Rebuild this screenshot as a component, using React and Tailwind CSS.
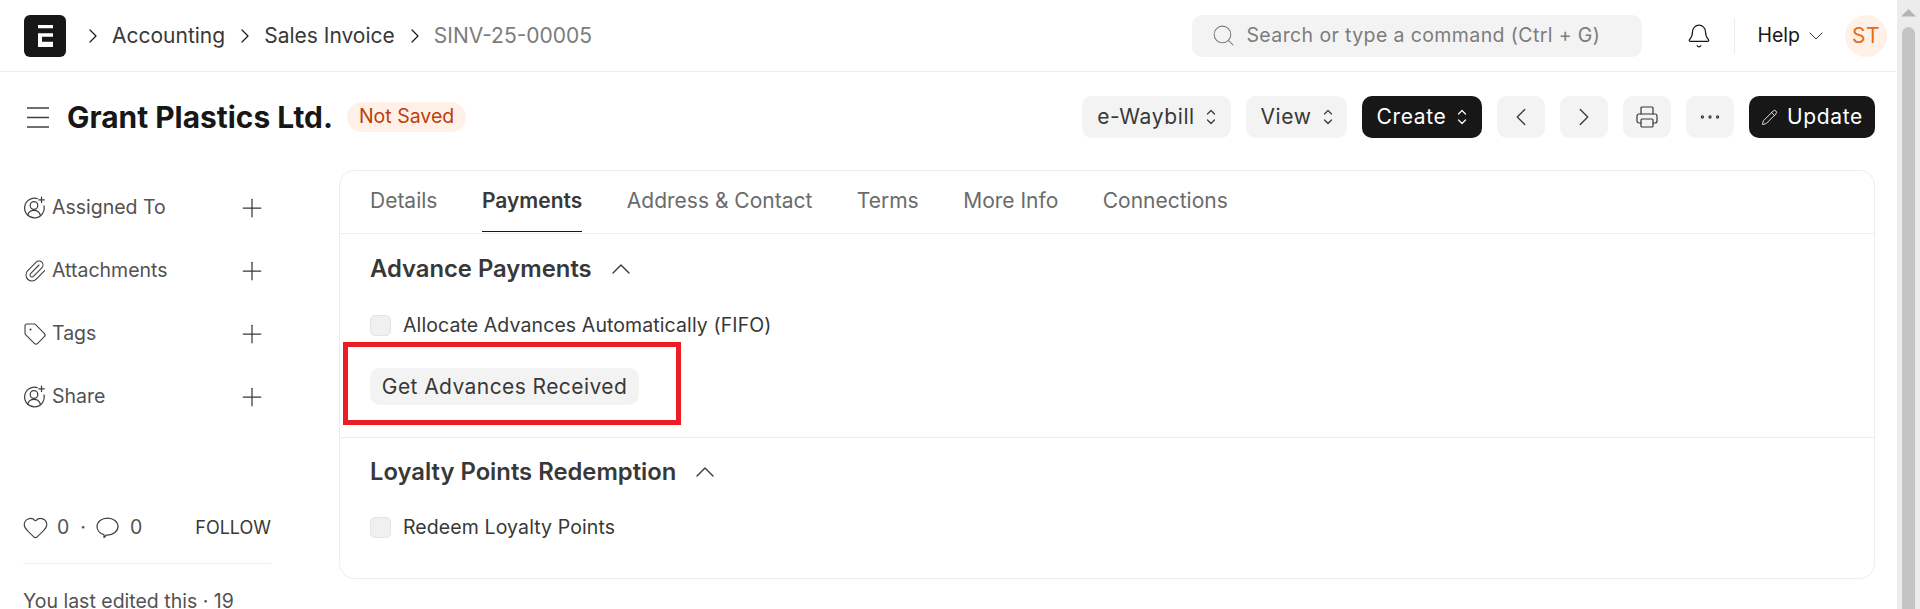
import { Search, Bell, ChevronDown, ChevronUp, ChevronLeft, ChevronRight, Printer, Ellipsis, Pencil, Plus, Paperclip, Tag, Heart } from 'lucide-react';

const Logo = () => (
  <div className="w-[42px] h-[42px] rounded-md bg-[#171717] flex items-center justify-center shrink-0">
    <svg width="15" height="22" viewBox="0 0 15 22" fill="#fff">
      <path d="M0 0h15v3.3H0zM0 8.3h15v3.4H4v5h11V22H0z" />
    </svg>
  </div>
);

const UserPlus = () => (
  <svg width="23" height="23" viewBox="0 0 23 23" fill="none" stroke="#404040" strokeWidth="1.25" strokeLinecap="round">
    <path d="M14.2 2.6A9.8 9.8 0 1 0 21 10" />
    <circle cx="11" cy="9.5" r="3.8" />
    <path d="M4.6 19.2c1-3.2 3.4-4.9 6.4-4.9s5.4 1.7 6.4 4.9" />
    <path d="M18.5 1v5.6M15.7 3.8h5.6" />
  </svg>
);

const Comment = () => (
  <svg width="23" height="22" viewBox="0 0 23 22" fill="none" stroke="#404040" strokeWidth="1.25" strokeLinejoin="round">
    <path d="M8 17.6C3.9 16.7 1 13.4 1 9.5 1 4.8 5.7 1 11.5 1S22 4.8 22 9.5 17.3 18 11.5 18h-.9L8 20.5z" />
  </svg>
);

const Hamburger = () => (
  <svg width="22" height="21" viewBox="0 0 22 21" fill="none" stroke="#404040" strokeWidth="1.5">
    <path d="M0 1h22M0 10.5h22M0 20h22" />
  </svg>
);

const UpDown = () => (
  <svg width="10" height="16" viewBox="0 0 10 16" fill="none" stroke="currentColor" strokeWidth="1.2" strokeLinecap="round" strokeLinejoin="round">
    <path d="M1.5 5 5 1.5 8.5 5M1.5 11 5 14.5 8.5 11" />
  </svg>
);

const Crumb = ({ children, muted }) => (
  <>
    <ChevronRight size={24} strokeWidth={1.2} className="text-[#171717] ml-[8px] mr-[7px]" />
    <span className={muted ? 'text-[#7c7c7c]' : 'text-[#383838]'}>{children}</span>
  </>
);

const ToolBtn = ({ children, className = '' }) => (
  <button className={`h-[42px] rounded-[10px] bg-[#f3f3f3] flex items-center justify-center text-[#383838] text-[21px] tracking-[0.03em] ${className}`}>
    {children}
  </button>
);

const SideRow = ({ icon, label }) => (
  <div className="h-[63px] flex items-center text-[19.5px] text-[#525252]">
    <div className="w-[29px] flex items-center">{icon}</div>
    <span className="flex-1">{label}</span>
    <Plus size={30} strokeWidth={1} className="text-[#383838] mr-[4px]" />
  </div>
);

const Check = ({ label }) => (
  <div className="flex items-center gap-[12px] text-[19.5px] tracking-[0.1px] text-[#383838]">
    <span className="w-[21px] h-[21px] rounded-[5px] bg-[#f0f0f0] border border-[#e4e4e4]" />
    <span>{label}</span>
  </div>
);

const Heading = ({ children }) => (
  <div className="flex items-center gap-[13px] text-[23.8px] font-semibold text-[#383838]">
    <span>{children}</span>
    <ChevronUp size={32} strokeWidth={1} className="text-[#383838]" />
  </div>
);

export default function App() {
  return (
    <div className='h-[609px] w-full overflow-hidden flex bg-white font-["Inter",sans-serif]'>
      <div className="flex-1 min-w-0 flex flex-col">
        <header className="h-[72px] shrink-0 border-b border-[#ededed] pl-[24px] pr-[10px] flex items-center">
          <Logo />
          <div className="ml-[7px] flex items-center text-[21px]">
            <Crumb>Accounting</Crumb>
            <Crumb>Sales Invoice</Crumb>
            <Crumb muted>SINV-25-00005</Crumb>
          </div>
          <div className="ml-auto w-[450px] h-[42px] rounded-[10px] bg-[#f3f3f3] flex items-center px-[19px] gap-[10px] text-[19.5px] tracking-[0.02em] text-[#7c7c7c]">
            <Search size={25} strokeWidth={1} />
            <span>Search or type a command (Ctrl + G)</span>
          </div>
          <Bell size={26} strokeWidth={1.1} className="ml-[44px] text-[#171717]" />
          <div className="ml-[22px] h-[36px] w-px bg-[#ededed]" />
          <span className="ml-[22px] text-[19.5px] text-[#171717]">Help</span>
          <ChevronDown size={24} strokeWidth={1} className="ml-[4px] text-[#383838]" />
          <div className="ml-[17px] w-[42px] h-[42px] rounded-full bg-[#fff1e7] text-[#e86c13] text-[21px] tracking-[0.02em] flex items-center justify-center">ST</div>
        </header>

        <div className="h-[98px] shrink-0 pl-[27px] pr-[22px] pb-[8px] flex items-center">
          <Hamburger />
          <h1 className="ml-[18px] text-[29.9px] font-bold text-[#171717]">Grant Plastics Ltd.</h1>
          <span className="ml-[14px] h-[30px] px-[12px] rounded-full bg-[#fff1e7] text-[#bd3e0c] text-[19.5px] flex items-center">Not Saved</span>
          <div className="ml-auto flex items-center gap-[15px]">
            <ToolBtn className="w-[149px] gap-[11px]">e-Waybill<UpDown /></ToolBtn>
            <ToolBtn className="w-[101px] gap-[11px]">View<UpDown /></ToolBtn>
            <button className="w-[120px] h-[42px] rounded-[10px] bg-[#171717] text-white text-[21px] tracking-[0.03em] flex items-center justify-center gap-[11px]">Create<UpDown /></button>
            <ToolBtn className="w-[48px]"><ChevronLeft size={30} strokeWidth={1} /></ToolBtn>
            <ToolBtn className="w-[48px]"><ChevronRight size={30} strokeWidth={1} /></ToolBtn>
            <ToolBtn className="w-[48px]"><Printer size={24} strokeWidth={1.2} /></ToolBtn>
            <ToolBtn className="w-[48px]"><Ellipsis size={26} strokeWidth={1.1} /></ToolBtn>
            <button className="w-[126px] h-[42px] rounded-[10px] bg-[#171717] text-white text-[21px] tracking-[0.03em] flex items-center justify-center gap-[9px]"><Pencil size={17} strokeWidth={1.2} />Update</button>
          </div>
        </div>

        <div className="flex-1 min-h-0 flex pl-[23px] pr-[22px]">
          <aside className="w-[248px] shrink-0 pt-[6px]">
            <SideRow icon={<UserPlus />} label="Assigned To" />
            <SideRow icon={<Paperclip size={24} strokeWidth={1.1} className="text-[#404040]" />} label="Attachments" />
            <SideRow icon={<Tag size={24} strokeWidth={1.1} className="text-[#404040]" />} label="Tags" />
            <SideRow icon={<UserPlus />} label="Share" />
            <div className="mt-[85px] flex items-center text-[19.5px] text-[#525252]">
              <Heart size={27} strokeWidth={1} className="text-[#404040] -ml-[1px]" />
              <span className="ml-[8px]">0</span>
              <span className="ml-[11px] mr-[10px]">·</span>
              <Comment />
              <span className="ml-[11px]">0</span>
              <span className="ml-auto text-[18px] text-[#383838]">FOLLOW</span>
            </div>
            <div className="mt-[21px] border-t border-[#ededed] pt-[23px] text-[19.5px] text-[#525252] whitespace-nowrap">You last edited this · 19</div>
          </aside>

          <main className="ml-[68px] flex-1 min-w-0 self-start h-[409px] rounded-[15px] border border-[#ededed]">
            <div className="h-[63px] border-b border-[#ededed] px-[30px] flex items-stretch gap-[44.5px] text-[21px] text-[#6b6b6b]">
              <span className="flex items-center pb-[2px]">Details</span>
              <span className="flex items-center font-semibold text-[#383838] border-b-[1.5px] border-[#171717] mb-[1px]">Payments</span>
              <span className="flex items-center pb-[2px]">Address &amp; Contact</span>
              <span className="flex items-center pb-[2px]">Terms</span>
              <span className="flex items-center pb-[2px]">More Info</span>
              <span className="flex items-center pb-[2px]">Connections</span>
            </div>
            <section className="h-[204px] border-b border-[#ededed] px-[30px] pt-[17px] relative">
              <Heading>Advance Payments</Heading>
              <div className="mt-[24px]"><Check label="Allocate Advances Automatically (FIFO)" /></div>
              <button className="mt-[28px] h-[37px] w-[269px] rounded-[10px] bg-[#f3f3f3] text-[21px] tracking-[0.02em] text-[#383838] flex items-center justify-center">Get Advances Received</button>
              <div className="absolute left-[3px] top-[108px] w-[338px] h-[83px] border-[5px] border-[#ed1c24]" />
            </section>
            <section className="px-[30px] pt-[16px]">
              <Heading>Loyalty Points Redemption</Heading>
              <div className="mt-[23px]"><Check label="Redeem Loyalty Points" /></div>
            </section>
          </main>
        </div>
      </div>

      <div className="w-[23px] shrink-0 bg-[#ececec] flex flex-col items-center">
        <svg width="15" height="27" viewBox="0 0 15 27" fill="#b5b5b5" className="shrink-0"><path d="M7.5 9l7.5 7.5H0z" /></svg>
        <div className="w-[13px] flex-1 rounded-t-full bg-[#c4c4c4]" />
      </div>
    </div>
  );
}
